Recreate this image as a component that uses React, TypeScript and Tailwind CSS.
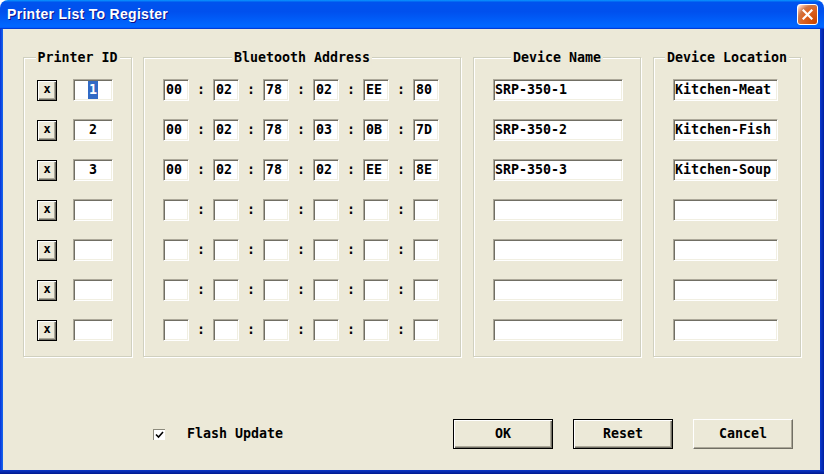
import React from 'react';

type Row = { id: string; bt: string[]; name: string; loc: string };

const rows: Row[] = [
  { id: '1', bt: ['00', '02', '78', '02', 'EE', '80'], name: 'SRP-350-1', loc: 'Kitchen-Meat' },
  { id: '2', bt: ['00', '02', '78', '03', '0B', '7D'], name: 'SRP-350-2', loc: 'Kitchen-Fish' },
  { id: '3', bt: ['00', '02', '78', '02', 'EE', '8E'], name: 'SRP-350-3', loc: 'Kitchen-Soup' },
  { id: '', bt: ['', '', '', '', '', ''], name: '', loc: '' },
  { id: '', bt: ['', '', '', '', '', ''], name: '', loc: '' },
  { id: '', bt: ['', '', '', '', '', ''], name: '', loc: '' },
  { id: '', bt: ['', '', '', '', '', ''], name: '', loc: '' },
];

const sunken =
  'h-[22px] bg-white border border-t-[#ACA899] border-l-[#ACA899] border-b-white border-r-white shadow-[inset_1px_1px_0_#716F64,inset_-1px_-1px_0_#F1EFE2] flex items-center leading-none';

function Group({ title, className, children }: { title: string; className: string; children: React.ReactNode }) {
  return (
    <div className={`relative h-[300px] border border-[#D0D0BF] shadow-[inset_1px_1px_0_#fff,1px_1px_0_#fff] ${className}`}>
      <span className="absolute -top-[8px] left-1/2 -translate-x-1/2 bg-[#ECE9D8] px-[2px] leading-[16px] whitespace-nowrap">
        {title}
      </span>
      <div className="flex flex-col gap-[18px] pt-[21px] pl-[19px]">{children}</div>
    </div>
  );
}

function XButton() {
  return (
    <div className="w-[20px] h-[21px] bg-[#ECE9D8] border border-black shadow-[inset_1px_1px_0_#fff,inset_-1px_-1px_0_#716F64,inset_-2px_-2px_0_#ACA899] flex items-center justify-center text-[12px] leading-none pb-[2px]">
      x
    </div>
  );
}

function Button({ label, strong }: { label: string; strong?: boolean }) {
  const edge = strong
    ? 'border border-black shadow-[inset_1px_1px_0_#fff,inset_-1px_-1px_0_#716F64,inset_-2px_-2px_0_#ACA899]'
    : 'border border-t-white border-l-white border-b-[#716F64] border-r-[#716F64] shadow-[inset_-1px_-1px_0_#ACA899]';
  return (
    <div className={`w-[100px] h-[30px] bg-[#ECE9D8] flex items-center justify-center ${edge}`}>{label}</div>
  );
}

export default function App() {
  return (
    <div className="w-[824px] h-[474px] bg-white">
      <div className="w-[824px] h-[474px] flex flex-col rounded-t-[8px] overflow-hidden">
        {/* Title bar */}
        <div className="h-[29px] shrink-0 flex items-center justify-between pl-[7px] pr-[6px] bg-[linear-gradient(180deg,#0997ff,#0053ee_8%,#0050ee_40%,#0066ff_88%,#0066ff_93%,#005bff_95%,#003dd7_96%,#003dd7)]">
          <span className="font-['Liberation_Sans',sans-serif] font-bold text-[14px] text-white [text-shadow:1px_1px_0_#0f1089] tracking-[0.3px]">
            Printer List To Register
          </span>
          <div className="w-[21px] h-[21px] rounded-[3px] border border-white bg-[radial-gradient(circle_at_90%_90%,#cc4600_0,#dc6527_55%,#cd7546_70%,#ffccb2_90%,#fff_100%)] flex items-center justify-center">
            <svg width="11" height="11" viewBox="0 0 11 11">
              <path d="M1.5 1.5 L9.5 9.5 M9.5 1.5 L1.5 9.5" stroke="#fff" strokeWidth="2.2" strokeLinecap="square" />
            </svg>
          </div>
        </div>

        <div className="flex-1 flex">
          <div className="w-[3px] bg-[linear-gradient(90deg,#0831d9,#166aee)]" />
          {/* Client area */}
          <div className="flex-1 bg-[#ECE9D8] flex flex-col font-['DejaVu_Sans_Mono',monospace] font-bold text-[13.3px] text-black pt-[28px] pl-[20px]">
            <div className="flex">
              <Group title="Printer ID" className="w-[109px]">
                {rows.map((r, i) => (
                  <div key={i} className="flex items-center gap-[16px] -ml-[6px]">
                    <XButton />
                    <div className={`${sunken} w-[40px] justify-center`}>
                      {r.id === '1' ? <span className="bg-[#316AC5] text-white px-[1px] py-[2px]">1</span> : r.id}
                    </div>
                  </div>
                ))}
              </Group>
              <Group title="Bluetooth Address" className="w-[318px] ml-[11px]">
                {rows.map((r, i) => (
                  <div key={i} className="flex items-center">
                    {r.bt.map((b, j) => (
                      <React.Fragment key={j}>
                        {j > 0 && <span className="w-[24px] text-center">:</span>}
                        <div className={`${sunken} w-[26px] pl-[2px]`}>{b}</div>
                      </React.Fragment>
                    ))}
                  </div>
                ))}
              </Group>
              <Group title="Device Name" className="w-[168px] ml-[12px]">
                {rows.map((r, i) => (
                  <div key={i} className={`${sunken} w-[130px] pl-[1px]`}>{r.name}</div>
                ))}
              </Group>
              <Group title="Device Location" className="w-[148px] ml-[12px]">
                {rows.map((r, i) => (
                  <div key={i} className={`${sunken} w-[105px] pl-[1px]`}>{r.loc}</div>
                ))}
              </Group>
            </div>

            <div className="flex items-center mt-[62px] pr-[27px]">
              <div className="ml-[130px] w-[12px] h-[11px] bg-white border-t border-l border-[#8c8a7c] flex items-center justify-center">
                <svg width="9" height="8" viewBox="0 0 9 8">
                  <path d="M1 3.5 L3.5 6 L8 1" stroke="#000" strokeWidth="1.6" fill="none" />
                </svg>
              </div>
              <span className="ml-[22px]">Flash Update</span>
              <div className="ml-auto flex gap-[20px]">
                <Button label="OK" strong />
                <Button label="Reset" strong />
                <Button label="Cancel" />
              </div>
            </div>
          </div>
          <div className="w-[4px] bg-[linear-gradient(90deg,#0c3bd0,#001ea0)]" />
        </div>
        <div className="h-[4px] shrink-0 bg-[linear-gradient(180deg,#0b36c8,#001890)]" />
      </div>
    </div>
  );
}
